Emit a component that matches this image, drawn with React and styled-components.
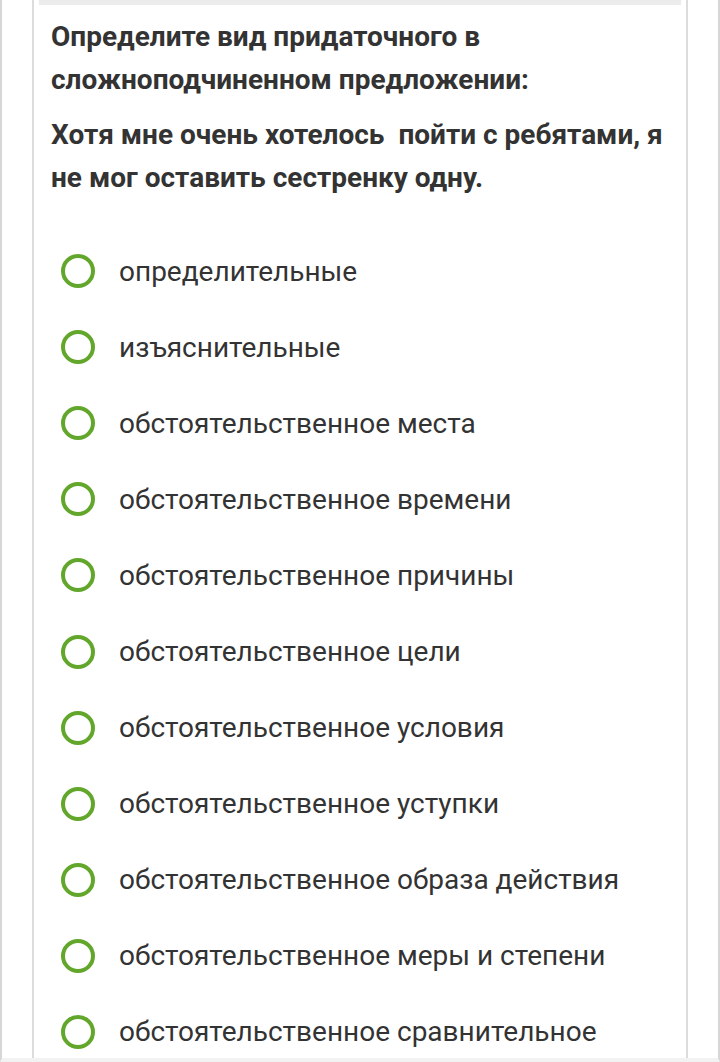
import React from "react";
import styled, { createGlobalStyle } from "styled-components";

const Global = createGlobalStyle`
  html, body { margin: 0; padding: 0; background: #fff; }
  body { font-family: Roboto, "Noto Sans", sans-serif; color: #333; }
`;

const Page = styled.div`
  width: 720px;
  height: 1062px;
  box-sizing: border-box;
  border-left: 2px solid #d6d6d6;
  border-right: 2px solid #d6d6d6;
  border-bottom: 4px solid #f2f2f2;
  padding: 0 30px;
  overflow: hidden;
`;

const Card = styled.div`
  height: 100%;
  box-sizing: border-box;
  border-left: 2px solid #dcdcdc;
  border-right: 2px solid #dcdcdc;
  background: #fff;
`;

const TopBar = styled.div`
  height: 5px;
  margin: 0 5px;
  background: #ececec;
`;

const Content = styled.div`
  padding: 10px 17px 0 17px;
`;

const Heading = styled.p`
  margin: 0;
  font-family: Roboto, sans-serif;
  font-weight: 700;
  font-size: 28px;
  line-height: 43px;
  color: #333;
`;

const Sentence = styled(Heading)`
  margin-top: 12px;
`;

const Options = styled.ul`
  list-style: none;
  margin: 34px 0 0 0;
  padding: 0 0 0 10px;
`;

const Option = styled.li`
  display: flex;
  align-items: center;
  height: 76.1px;
  gap: 24px;
`;

const Radio = styled.span`
  width: 34px;
  height: 34px;
  box-sizing: border-box;
  border-radius: 50%;
  border: 4px solid #62a72b;
  flex: none;
`;

const Label = styled.span`
  font-family: Roboto, sans-serif;
  font-size: 28px;
  color: #333;
`;

const options = [
  "определительные",
  "изъяснительные",
  "обстоятельственное места",
  "обстоятельственное времени",
  "обстоятельственное причины",
  "обстоятельственное цели",
  "обстоятельственное условия",
  "обстоятельственное уступки",
  "обстоятельственное образа действия",
  "обстоятельственное меры и степени",
  "обстоятельственное сравнительное",
];

export default function App() {
  return (
    <>
      <Global />
      <Page>
        <Card>
          <TopBar />
          <Content>
            <Heading>Определите вид придаточного в сложноподчиненном предложении:</Heading>
            <Sentence>Хотя мне очень хотелось&nbsp; пойти с ребятами, я не мог оставить сестренку одну.</Sentence>
            <Options>
              {options.map((o) => (
                <Option key={o}>
                  <Radio />
                  <Label>{o}</Label>
                </Option>
              ))}
            </Options>
          </Content>
        </Card>
      </Page>
    </>
  );
}
